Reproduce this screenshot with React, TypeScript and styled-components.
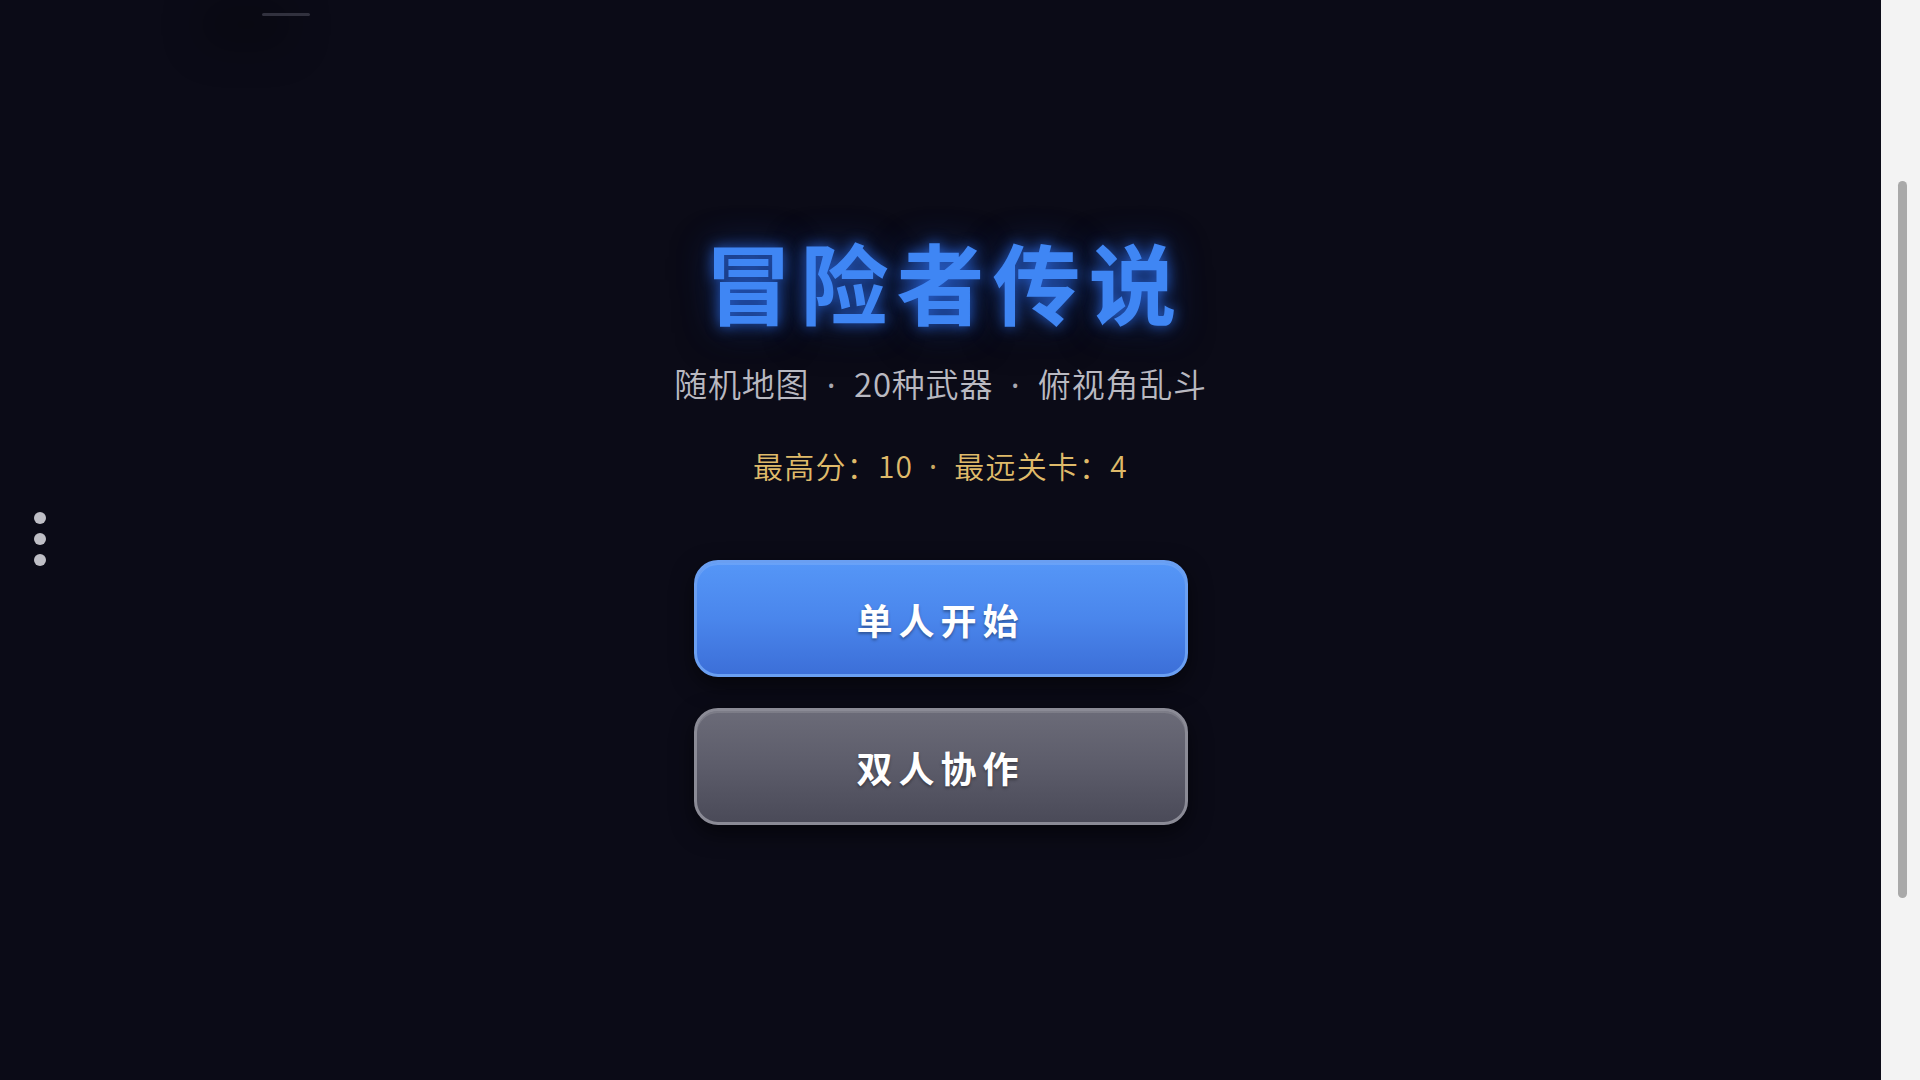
import React from "react";
import styled, { createGlobalStyle } from "styled-components";

const Global = createGlobalStyle`
  html, body { margin: 0; padding: 0; height: 100%; overflow: hidden; }
  body {
    background: #0b0b17;
    font-family: "Noto Sans CJK SC", "Noto Sans", sans-serif;
  }
  #root { height: 100%; }
`;

const Page = styled.div`
  display: flex;
  width: 1920px;
  height: 1080px;
  background: #0b0b17;
`;

const Stage = styled.main`
  position: relative;
  flex: 1;
  display: flex;
  flex-direction: column;
  align-items: center;
  padding-top: 227px;
  box-sizing: border-box;
`;

const TopMark = styled.div`
  position: absolute;
  left: 262px;
  top: 13px;
  width: 48px;
  height: 3px;
  border-radius: 2px;
  background: rgba(120, 120, 135, 0.35);
  box-shadow: -40px 10px 40px 20px rgba(0, 0, 0, 0.25);
`;

const SideMenu = styled.div`
  position: absolute;
  left: 34px;
  top: 512px;
  display: flex;
  flex-direction: column;
  gap: 9px;
`;

const Dot = styled.span`
  width: 12px;
  height: 12px;
  border-radius: 50%;
  background: #bfbfc6;
`;

const Title = styled.h1`
  margin: 0;
  font-size: 88px;
  line-height: 106px;
  font-weight: 700;
  letter-spacing: 8px;
  padding-left: 8px;
  color: #3f86f4;
  text-shadow: 0 0 14px rgba(50, 120, 255, 0.75), 0 0 36px rgba(40, 100, 240, 0.45),
    0 6px 40px rgba(0, 0, 0, 0.9);
`;

const Subtitle = styled.p`
  margin: 28px 0 0;
  font-size: 33px;
  line-height: 44px;
  letter-spacing: 0.8px;
  font-weight: 350;
  color: #b9b9c1;
`;

const Sep = styled.span`
  font-family: "Noto Sans", "DejaVu Sans", sans-serif;
  font-weight: 400;
  margin: 0 0.53em;
  opacity: 0.9;
`;

const Score = styled.p`
  margin: 38px 0 0;
  font-size: 30px;
  line-height: 40px;
  letter-spacing: 1.2px;
  font-weight: 350;
  color: #dfba6a;
`;

const Buttons = styled.div`
  margin-top: 73px;
  display: flex;
  flex-direction: column;
  gap: 31px;
`;

const MenuButton = styled.button<{ $variant: "primary" | "secondary" }>`
  width: 494px;
  height: 117px;
  border-radius: 24px;
  box-sizing: border-box;
  cursor: pointer;
  font-family: "Noto Sans CJK SC", "Noto Sans", sans-serif;
  font-size: 36px;
  font-weight: 700;
  letter-spacing: 6px;
  padding-left: 6px;
  color: #ffffff;
  text-shadow: 0 2px 3px rgba(0, 0, 0, 0.35);
  border: 3px solid ${(p) => (p.$variant === "primary" ? "#6a9ff2" : "#8b8b96")};
  background: ${(p) =>
    p.$variant === "primary"
      ? "linear-gradient(180deg, #5596f7 0%, #4a86ec 50%, #3c6fd8 100%)"
      : "linear-gradient(180deg, #6b6b78 0%, #5c5c6a 50%, #4a4a58 100%)"};
  box-shadow: 0 8px 22px rgba(0, 0, 0, 0.55), inset 0 2px 0 rgba(255, 255, 255, 0.12);
`;

const ScrollTrack = styled.aside`
  width: 39px;
  height: 100%;
  background: #f3f3f3;
  display: flex;
  justify-content: center;
  padding-top: 181px;
  box-sizing: border-box;
`;

const ScrollThumb = styled.div`
  width: 9px;
  height: 717px;
  border-radius: 5px;
  background: #a9a9a9;
  margin-left: 3px;
`;

export default function App() {
  return (
    <>
      <Global />
      <Page>
        <Stage>
          <TopMark />
          <SideMenu>
            <Dot />
            <Dot />
            <Dot />
          </SideMenu>
          <Title>冒险者传说</Title>
          <Subtitle>
            随机地图<Sep>·</Sep>20种武器<Sep>·</Sep>俯视角乱斗
          </Subtitle>
          <Score>
            最高分：10<Sep>·</Sep>最远关卡：4
          </Score>
          <Buttons>
            <MenuButton $variant="primary">单人开始</MenuButton>
            <MenuButton $variant="secondary">双人协作</MenuButton>
          </Buttons>
        </Stage>
        <ScrollTrack>
          <ScrollThumb />
        </ScrollTrack>
      </Page>
    </>
  );
}
